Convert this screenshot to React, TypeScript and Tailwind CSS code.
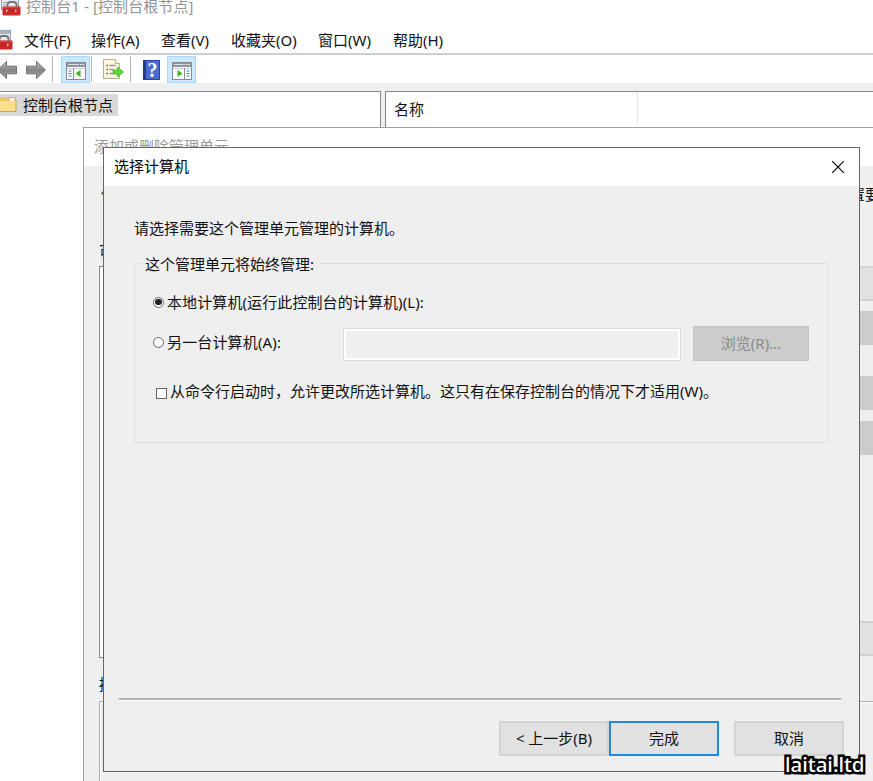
import React from "react";

const menuItems = [
    { label: "文件(F)", width: "w-[67px]" },
    { label: "操作(A)", width: "w-[70px]" },
    { label: "查看(V)", width: "w-[70px]" },
    { label: "收藏夹(O)", width: "w-[87px]" },
    { label: "窗口(W)", width: "w-[75px]" },
    { label: "帮助(H)", width: "w-[70px]" },
];

const ToolboxIcon: React.FC<{ className?: string }> = ({ className }) => (
    <svg width="20" height="20" viewBox="0 0 20 20" className={`shrink-0 ${className ?? ""}`}>
        <rect x="0.5" y="0.5" width="17" height="13" fill="#e6eaee" stroke="#98a2ac" />
        <rect x="1" y="1" width="16" height="3" fill="#a9b4bf" />
        <path d="M2 6.5h4M2 9h3" stroke="#8fa2b8" />
        <path d="M6.5 11V9q0-3 3-3h3q3 0 3 3v2" fill="none" stroke="#6d757d" strokeWidth="1.8" />
        <rect x="1.5" y="10.5" width="18" height="9" rx="1" fill="#cb2a27" />
        <path d="M2 11.3h17" stroke="#de4a46" />
        <path d="M2 14.8h17" stroke="#b3211e" />
        <rect x="5" y="13.5" width="1.5" height="2.5" fill="#e3b5b5" />
        <rect x="14" y="13.5" width="1.5" height="2.5" fill="#e3b5b5" />
    </svg>
);

const ArrowIcon: React.FC<{ flip?: boolean }> = ({ flip }) => (
    <svg width="22" height="20" viewBox="0 0 22 20" className={flip ? "-scale-x-100" : ""}>
        <defs>
            <linearGradient id="arrow" x1="0" y1="0" x2="0" y2="1">
                <stop offset="0" stopColor="#c5c5c5" />
                <stop offset="0.5" stopColor="#858585" />
                <stop offset="1" stopColor="#a5a5a5" />
            </linearGradient>
        </defs>
        <path d="M1.5 6.2h10V1.5L20.5 10l-9 8.5v-4.7h-10z" fill="url(#arrow)" stroke="#707070" strokeLinejoin="round" />
    </svg>
);

const PaneIcon: React.FC<{ right?: boolean }> = ({ right }) => (
    <svg width="20" height="18" viewBox="0 0 20 18">
        <rect x="0.5" y="0.5" width="19" height="17" fill="#fbfbfb" stroke="#858c94" />
        <rect x="1" y="1" width="18" height="4" fill="#8d959e" />
        <path d="M2 2.5h11" stroke="#d9dee3" />
        <path d="M14 2.5h1.5M16.5 2.5h1.5" stroke="#fff" />
        <path d="M1 6.5h18" stroke="#c8cdd2" />
        {right ? (
            <>
                <path d="M12.5 6v11" stroke="#858c94" />
                <path d="M14.5 9h3M14.5 11.5h3M14.5 14h3" stroke="#4b82c4" />
                <path d="M5.5 8v7l5-3.5z" fill="#3cb91d" />
            </>
        ) : (
            <>
                <path d="M7.5 6v11" stroke="#858c94" />
                <path d="M2.5 9h3M2.5 11.5h3M2.5 14h3" stroke="#4b82c4" />
                <path d="M14.5 8v7l-5-3.5z" fill="#3cb91d" />
            </>
        )}
    </svg>
);

const ExportIcon: React.FC = () => (
    <svg width="21" height="21" viewBox="0 0 21 21">
        <path d="M.5.5h12l4 4v15H.5z" fill="#fbf6dc" stroke="#b5af98" />
        <path d="M12.5.5v4h4" fill="#fff" stroke="#b5af98" />
        <path d="M3.5 6.5H5M3.5 10.5H5M3.5 14.5H5" stroke="#555" strokeWidth="1.3" />
        <path d="M6.5 6.5h6M6.5 10.5h4M6.5 14.5h4" stroke="#9a96a0" strokeWidth="1.3" />
        <path d="M10 11h4.5V8l6 5-6 5v-3H10z" fill="#5fd63b" stroke="#4cb42f" strokeWidth="0.8" />
    </svg>
);

const HelpIcon: React.FC = () => (
    <span className="flex h-5 w-[17px] items-center justify-center border border-[#27449c] border-l-[3px] border-l-[#1f3c91] bg-[#4a6bd0] font-['Liberation_Serif',serif] text-[20px] font-bold leading-none text-white">
        ?
    </span>
);

const Separator: React.FC<{ className?: string }> = ({ className }) => (
    <span className={`h-[26px] w-px shrink-0 bg-[#b4b4b4] ${className ?? ""}`} />
);

const DialogButton: React.FC<{ label: string; primary?: boolean; className?: string }> = ({ label, primary, className }) => (
    <button
        className={`flex h-[35px] items-center justify-center bg-[#e1e1e1] pb-[2px] ${
            primary ? "border-2 border-[#2389da]" : "border-2 border-[#d3d3d3]"
        } ${className ?? ""}`}
    >
        {label}
    </button>
);

const MainWindow: React.FC = () => (
    <div className="flex h-full flex-col">
        <div className="flex h-[24px] shrink-0 items-start text-[#949494]">
            <ToolboxIcon className="-mt-[4px] ml-px" />
            <span className="-mt-[5px] ml-[5px] leading-[22px] tracking-[0.1px]">控制台1 - [控制台根节点]</span>
        </div>
        <div className="flex h-[29px] shrink-0 items-start">
            <ToolboxIcon className="-ml-[7px] mt-[6px]" />
            <div className="ml-[11px] mt-[5px] flex">
                {menuItems.map(({ label, width }) => (
                    <span key={label} className={width}>{label}</span>
                ))}
            </div>
        </div>
        <div className="flex h-[30px] shrink-0 items-end border-t-2 border-[#cfcfd1]">
            <div className="flex h-7 items-center">
                <span className="-ml-1 mt-[2px]"><ArrowIcon flip /></span>
                <span className="ml-[7px] mt-[2px]"><ArrowIcon /></span>
                <Separator className="ml-[5px]" />
                <span className="ml-2 flex h-[27px] w-[29px] items-center justify-center border border-[#a8d8ff] bg-[#cce8ff] pt-1">
                    <PaneIcon />
                </span>
                <Separator className="ml-px" />
                <span className="ml-[11px] mt-px"><ExportIcon /></span>
                <Separator className="ml-[6px]" />
                <span className="ml-3 mt-[2px]"><HelpIcon /></span>
                <span className="ml-[7px] flex h-[27px] w-[29px] items-center justify-center border border-[#a8d8ff] bg-[#cce8ff] pt-1">
                    <PaneIcon right />
                </span>
            </div>
        </div>
        <div className="flex flex-1 gap-1 bg-[#efefef] pt-2">
            <div className="w-[381px] border-r border-t border-[#828790] bg-white">
                <div className="mt-[2px] flex h-[22px] w-[118px] items-center bg-[#d9d9d9]">
                    <svg width="17" height="18" viewBox="0 0 17 18" className="shrink-0">
                        <path d="M0 1h7l2 2.5h7v12H0z" fill="#e9c56b" />
                        <path d="M9 1.5h6v4H9z" fill="#fff9e5" stroke="#d6ac4e" />
                        <path d="M0 5h16v10.5H0z" fill="#fbdf8f" />
                        <path d="M0 15.5h16V4" fill="none" stroke="#cda548" />
                    </svg>
                    <span className="ml-[6px] whitespace-nowrap">控制台根节点</span>
                </div>
            </div>
            <div className="flex-1 border-l border-t border-[#828790] bg-white">
                <div className="flex h-[33px] w-[252px] items-center border-r border-[#e5e5e5] pl-2">名称</div>
            </div>
        </div>
    </div>
);

const SnapInDialog: React.FC = () => (
    <div className="absolute left-[83px] top-[127px] flex h-[700px] w-[840px] flex-col border border-[#a0a0a0] bg-[#efefef]">
        <div className="h-[38px] shrink-0 bg-white pl-[10px] pt-[7px] text-[#999]">添加或删除管理单元</div>
        <div className="flex h-[57px] shrink-0 items-center pb-px pl-[17px]">
            <span className="w-[749px]">你</span>
            <span>置要</span>
        </div>
        <div className="flex h-[43px] shrink-0 items-end pb-[4px] pl-[15px]">可</div>
        <div className="flex h-[392px] shrink-0 pl-[15px]">
            <div className="w-[700px] border border-[#828790] bg-white" />
            <div className="ml-5 w-[140px]">
                <div className="h-[35px] border-2 border-[#d3d3d3] bg-[#e1e1e1]" />
                <div className="mt-[10px] h-[34px] bg-[#ccc]" />
                <div className="mt-[31px] h-[34px] bg-[#ccc]" />
                <div className="mt-[11px] h-[34px] bg-[#ccc]" />
                <div className="mt-[166px] h-[35px] border-2 border-[#d3d3d3] bg-[#e1e1e1]" />
            </div>
        </div>
        <div className="flex h-[43px] shrink-0 items-center pl-[15px] pt-[9px]">描</div>
        <div className="ml-[15px] flex-1 border border-[#b0b0b0] shadow-[inset_1px_1px_0_#fff]" />
    </div>
);

const SelectComputerDialog: React.FC = () => (
    <div className="absolute left-[103px] top-[147px] flex h-[625px] w-[757px] flex-col border border-[#646464] bg-[#efefef]">
        <div className="flex h-[38px] shrink-0 items-center justify-between bg-white pl-[10px] pr-[15px] text-black">
            <span className="pb-[2px]">选择计算机</span>
            <svg width="12" height="12" viewBox="0 0 12 12">
                <path d="M0 0l12 12M12 0L0 12" stroke="#000" strokeWidth="1.1" />
            </svg>
        </div>
        <div className="flex flex-1 flex-col pl-[15px] pr-[17px]">
            <p className="ml-[15px] mt-[30px] h-6 leading-6">请选择需要这个管理单元管理的计算机。</p>
            <div className="ml-[15px] mt-[23px] h-[180px] w-[694px] border border-[#e0e0e0]">
                <div className="-mt-[12px] ml-[6px] w-[179px] bg-[#efefef] pl-[4px] leading-6">这个管理单元将始终管理:</div>
                <div className="ml-[18px] mt-[14px] flex h-6 items-center">
                    <span className="flex size-[11px] items-center justify-center rounded-full border border-[#666] bg-white">
                        <span className="size-[6.5px] rounded-full bg-[#222]" />
                    </span>
                    <span className="ml-[3px] tracking-[0.1px]">本地计算机(运行此控制台的计算机)(L):</span>
                </div>
                <div className="ml-[18px] mt-[12px] flex h-[35px] items-center">
                    <span className="mb-[3px] size-[11px] rounded-full border border-[#666] bg-white" />
                    <span className="mb-[3px] ml-[3px] w-[176px] tracking-[0.15px]">另一台计算机(A):</span>
                    <span className="mt-[2px] h-[33px] w-[338px] border border-[#dcdcdc] bg-[#efefef] shadow-[inset_0_0_0_2px_#fff]" />
                    <span className="ml-3 flex h-[35px] w-[116px] items-center justify-center border border-[#c4c4c4] bg-[#ccc] pb-px text-[#8b8b8b]">
                        浏览(R)...
                    </span>
                </div>
                <div className="ml-[21px] mt-[18px] flex h-6 items-center">
                    <span className="mt-[4px] size-[11px] border border-[#666] bg-white" />
                    <span className="ml-[3px]">从命令行启动时，允许更改所选计算机。这只有在保存控制台的情况下才适用(W)。</span>
                </div>
            </div>
            <div className="mt-[255px] h-[3px] w-[722px] border-b border-t-2 border-b-white border-t-[#b4b4b4]" />
            <div className="mt-[20px] flex">
                <DialogButton label="< 上一步(B)" className="ml-[380px] w-[110px] shrink-0" />
                <DialogButton label="完成" primary className="w-[110px] shrink-0" />
                <DialogButton label="取消" className="ml-[15px] w-[110px] shrink-0" />
            </div>
        </div>
    </div>
);

const App: React.FC = () => {
    return (
        <div className="relative h-[781px] w-[873px] overflow-hidden whitespace-nowrap bg-white font-['Noto_Sans','Noto_Sans_CJK_SC',sans-serif] text-[15px] leading-[22px] text-[#111]">
            <MainWindow />
            <SnapInDialog />
            <SelectComputerDialog />
            <span className="absolute left-[785px] top-[750px] font-['Noto_Sans',sans-serif] text-[20.5px] font-medium leading-7 text-white [-webkit-text-stroke:5px_#000] [paint-order:stroke_fill] [stroke-linejoin:round]">
                laitai.ltd
            </span>
        </div>
    );
};

export default App;
